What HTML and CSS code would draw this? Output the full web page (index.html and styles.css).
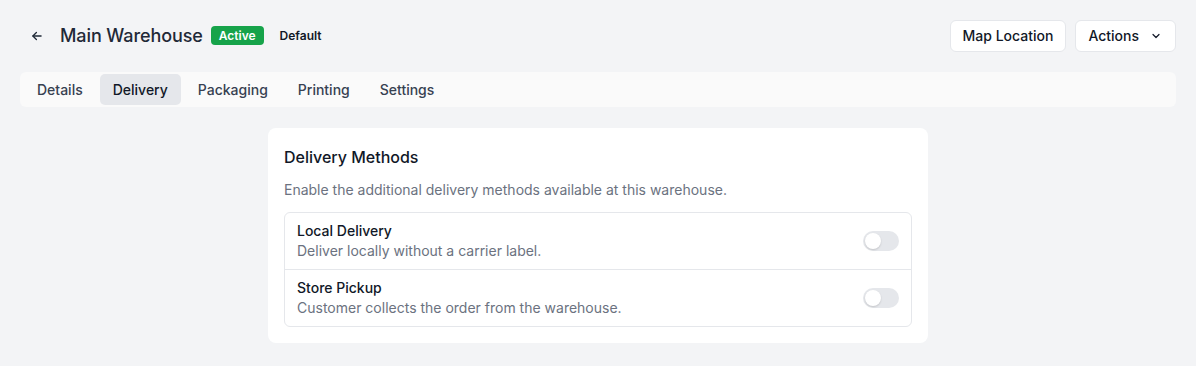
FILE: index.html
```html
<!DOCTYPE html>
<html>
<head>
<meta charset="utf-8">
<link rel="stylesheet" href="styles.css">
</head>
<body>
<div class="page">
  <header class="header">
    <div class="title-group">
      <button class="back" aria-label="Back">
        <svg width="14" height="14" viewBox="0 0 24 24" fill="none" stroke="currentColor" stroke-width="2.2" stroke-linecap="round" stroke-linejoin="round"><path d="M19 12H5"/><path d="M11 6l-6 6 6 6"/></svg>
      </button>
      <h1 class="title">Main Warehouse</h1>
      <span class="badge badge-active">Active</span>
      <span class="badge badge-plain">Default</span>
    </div>
    <div class="actions">
      <button class="btn">Map Location</button>
      <button class="btn">Actions
        <svg class="chev" width="12" height="12" viewBox="0 0 24 24" fill="none" stroke="currentColor" stroke-width="2.4" stroke-linecap="round" stroke-linejoin="round"><path d="M6 9l6 6 6-6"/></svg>
      </button>
    </div>
  </header>

  <nav class="tabs">
    <span class="tab">Details</span>
    <span class="tab tab-active">Delivery</span>
    <span class="tab">Packaging</span>
    <span class="tab">Printing</span>
    <span class="tab">Settings</span>
  </nav>

  <main class="content">
    <section class="card">
      <h2 class="card-title">Delivery Methods</h2>
      <p class="card-desc">Enable the additional delivery methods available at this warehouse.</p>
      <div class="list">
        <div class="row">
          <div class="row-text">
            <div class="row-title">Local Delivery</div>
            <div class="row-desc">Deliver locally without a carrier label.</div>
          </div>
          <span class="toggle"><span class="knob"></span></span>
        </div>
        <div class="row">
          <div class="row-text">
            <div class="row-title">Store Pickup</div>
            <div class="row-desc">Customer collects the order from the warehouse.</div>
          </div>
          <span class="toggle"><span class="knob"></span></span>
        </div>
      </div>
    </section>
  </main>
</div>
</body>
</html>
```

FILE: styles.css
```css
* { box-sizing: border-box; }
html, body { margin: 0; padding: 0; }
body {
  background: #f3f4f6;
  font-family: Inter, "Noto Sans", sans-serif;
  color: #111827;
}
.page {
  padding: 20px;
}
.header {
  display: flex;
  align-items: center;
  justify-content: space-between;
  height: 31px;
}
.title-group {
  display: flex;
  align-items: center;
}
.back {
  border: 0;
  background: none;
  padding: 0;
  margin: 0 0 0 10px;
  width: 14px;
  height: 14px;
  color: #1f2937;
  display: flex;
}
.title {
  margin: 0 0 0 16px;
  font-size: 18px;
  font-weight: 500;
  color: #1f2937;
  letter-spacing: -0.1px;
}
.badge {
  font-size: 12px;
  font-weight: 600;
  line-height: 19px;
  padding: 0 8px;
  border-radius: 4px;
}
.badge-active {
  margin-left: 8px;
  background: #16a34a;
  color: #fff;
}
.badge-plain {
  margin-left: 8px;
  color: #111827;
}
.actions {
  display: flex;
  gap: 9px;
}
.btn {
  font-family: inherit;
  font-size: 14px;
  font-weight: 500;
  color: #111827;
  background: #fff;
  border: 1px solid #e5e7eb;
  border-radius: 6px;
  height: 32px;
  padding: 0 12px;
  display: flex;
  align-items: center;
}
.chev {
  margin-left: 11px;
  margin-right: 1px;
}
.tabs {
  margin-top: 21px;
  background: #fafafa;
  border-radius: 6px;
  padding: 2px 4px;
  display: flex;
  gap: 4px;
}
.tab {
  font-size: 14px;
  font-weight: 500;
  color: #374151;
  padding: 0 13px;
  height: 31px;
  line-height: 31px;
  border-radius: 5px;
}
.tab-active {
  background: #e5e7eb;
  color: #111827;
}
.content {
  display: flex;
  justify-content: center;
  margin-top: 21px;
}
.card {
  width: 660px;
  background: #fff;
  border-radius: 8px;
  padding: 16px;
}
.card-title {
  margin: 1px 0 0;
  font-size: 16px;
  font-weight: 500;
  line-height: 24px;
  color: #111827;
}
.card-desc {
  margin: 11px 0 0;
  font-size: 14px;
  line-height: 20px;
  color: #6b7280;
}
.list {
  margin-top: 12px;
  border: 1px solid #e5e7eb;
  border-radius: 6px;
}
.row {
  display: flex;
  align-items: center;
  justify-content: space-between;
  padding: 0 12px;
  height: 56px;
}
.row + .row {
  border-top: 1px solid #e5e7eb;
  height: 57px;
}
.row-title {
  font-size: 14px;
  font-weight: 500;
  line-height: 20px;
  color: #111827;
}
.row-desc {
  font-size: 14px;
  line-height: 20px;
  color: #6b7280;
}
.toggle {
  width: 36px;
  height: 20px;
  border-radius: 10px;
  background: #e5e7eb;
  position: relative;
  display: block;
}
.knob {
  position: absolute;
  left: 2px;
  top: 2px;
  width: 16px;
  height: 16px;
  border-radius: 50%;
  background: #fff;
  box-shadow: 0 1px 2px rgba(0,0,0,0.15);
}
```
